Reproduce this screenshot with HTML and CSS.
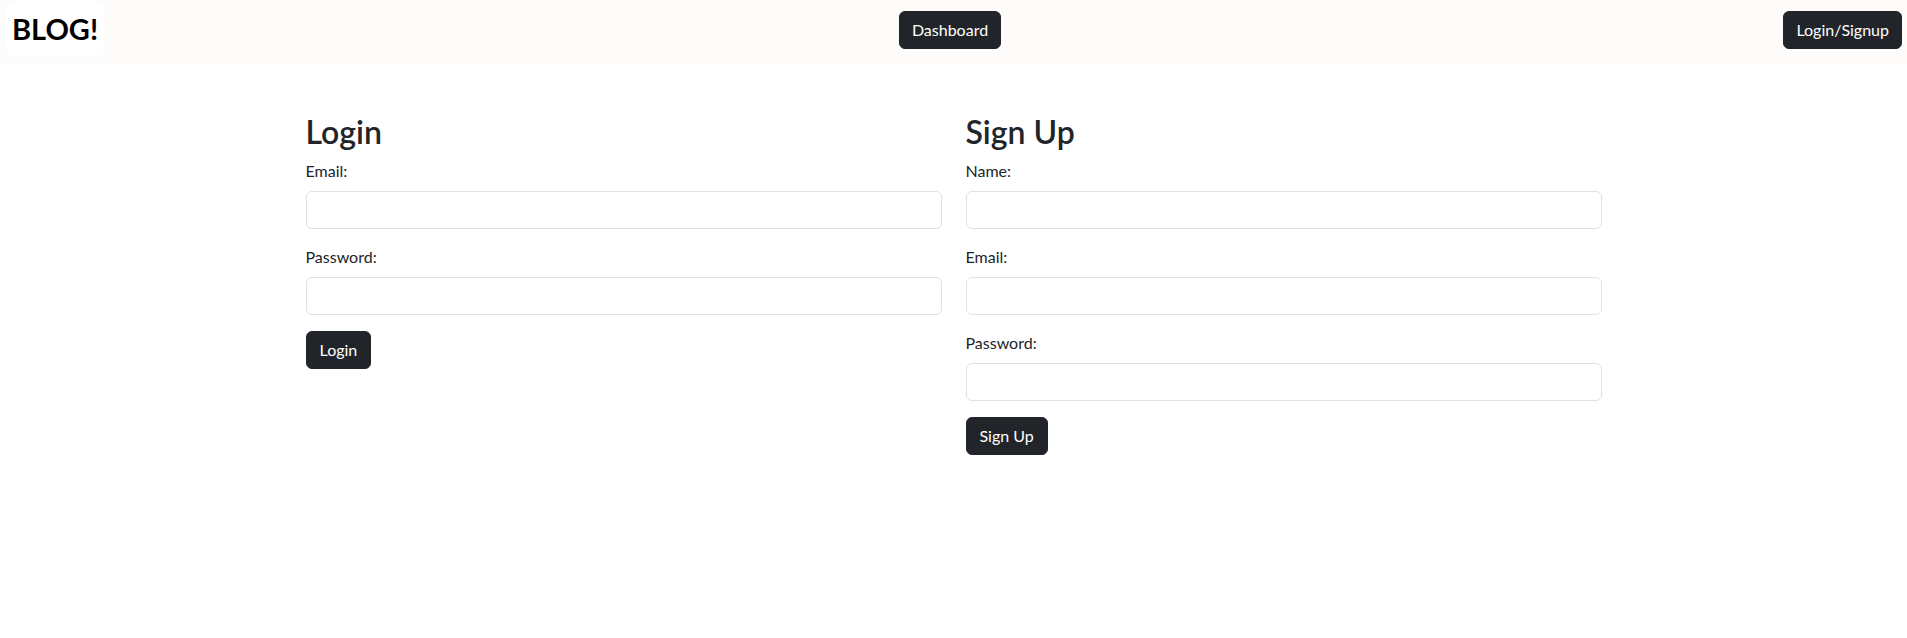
FILE: index.html
```html
<!DOCTYPE html>
<html lang="en">
<head>
<meta charset="utf-8">
<title>Blog</title>
<link rel="stylesheet" href="styles.css">
</head>
<body>
<nav class="navbar">
  <div class="brand">BLOG!</div>
  <div class="nav-center"><button class="btn">Dashboard</button></div>
  <div class="nav-right"><button class="btn">Login/Signup</button></div>
</nav>
<main class="container">
  <div class="row">
    <section class="col">
      <h2>Login</h2>
      <form>
        <div class="group">
          <label>Email:</label>
          <input type="email" class="input">
        </div>
        <div class="group">
          <label>Password:</label>
          <input type="password" class="input">
        </div>
        <button type="button" class="btn btn-form">Login</button>
      </form>
    </section>
    <section class="col">
      <h2>Sign Up</h2>
      <form>
        <div class="group">
          <label>Name:</label>
          <input type="text" class="input">
        </div>
        <div class="group">
          <label>Email:</label>
          <input type="email" class="input">
        </div>
        <div class="group">
          <label>Password:</label>
          <input type="password" class="input">
        </div>
        <button type="button" class="btn btn-form">Sign Up</button>
      </form>
    </section>
  </div>
</main>
</body>
</html>
```

FILE: styles.css
```css
* { box-sizing: border-box; }
html, body { margin: 0; padding: 0; }
body {
  font-family: "Segoe UI", Lato, "Noto Sans", sans-serif;
  font-size: 16px;
  line-height: 1.5;
  color: #212529;
  background: #fff;
}
.navbar {
  height: 65px;
  background: #fdfcfa;
  display: grid;
  grid-template-columns: 1fr auto 1fr;
  align-items: start;
}
.brand {
  justify-self: start;
  margin: 1px 0 0 6px;
  height: 56px;
  padding: 0 6px;
  display: flex;
  align-items: center;
  background: #fff;
  border-radius: 8px;
  font-weight: 700;
  font-size: 29px;
  color: #000;
}
.nav-center { padding-top: 11px; margin-right: 7px; }
.nav-right { justify-self: end; padding-top: 11px; padding-right: 5px; }
.btn {
  font-family: inherit;
  font-size: 16px;
  line-height: 24px;
  padding: 6px 12px;
  color: #fff;
  background: #212529;
  border: 1px solid #212529;
  border-radius: 6px;
  cursor: pointer;
}
.btn-form { padding: 6px 13px; }
.container {
  width: 1320px;
  margin: 48px auto 0;
  padding: 0 12px;
}
.row {
  display: grid;
  grid-template-columns: 1fr 1fr;
  margin: 0 -12px;
}
.col { padding: 0 12px; }
h2 {
  margin: 0 0 8px;
  font-size: 32px;
  font-weight: 600;
  line-height: 1.2;
}
form { margin: 0; }
.group { margin-bottom: 16px; }
label { display: block; margin-bottom: 8px; }
.input {
  display: block;
  width: 100%;
  height: 38px;
  padding: 6px 12px;
  font-family: inherit;
  font-size: 16px;
  border: 1px solid #dee2e6;
  border-radius: 6px;
  background: #fff;
}
```
